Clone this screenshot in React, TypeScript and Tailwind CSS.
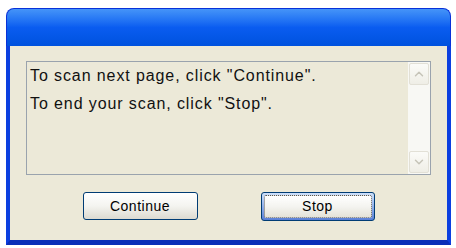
import { ChevronUp, ChevronDown } from "lucide-react"

function ScrollButton({ dir }: { dir: "up" | "down" }) {
  const Icon = dir === "up" ? ChevronUp : ChevronDown
  return (
    <div className="flex h-[22px] w-[20px] items-center justify-center rounded-[2px] border border-[#e2e0d6] bg-gradient-to-b from-[#fbfbf8] to-[#efeee6]">
      <Icon size={14} strokeWidth={2.5} className="text-[#c6c4b8]" />
    </div>
  )
}

export default function App() {
  return (
    <div className="h-[248px] w-[456px] bg-white pl-[6px] pt-[8px] font-['Liberation_Sans',Arial,sans-serif]">
      <div className="flex h-[237px] w-[445px] flex-col">
        <div className="h-[38px] rounded-t-[8px] border border-b-0 border-[#0831d9] bg-gradient-to-b from-[#4594f8] via-[#0a5cf0] to-[#0052de]" />
        <div className="flex flex-1 flex-col border-x-[4px] border-b-[5px] border-x-[#0b3fe0] border-b-[#0a2fb8] bg-[#ece9d8] px-[16px] pt-[15px]">
          <div className="flex h-[114px] border border-[#9aa3ad] bg-[#ece9d8]">
            <div className="flex-1 pl-[3px] pt-0 text-[16px] leading-[28px] tracking-[0.9px] text-[#111]">
              <div>To scan next page, click "Continue".</div>
              <div>To end your scan, click "Stop".</div>
            </div>
            <div className="flex w-[22px] flex-col justify-between bg-[#f8f8f4] py-[1px] pl-[1px]">
              <ScrollButton dir="up" />
              <ScrollButton dir="down" />
            </div>
          </div>
          <div className="mt-[17px] flex justify-center gap-[63px]">
            <button className="h-[28px] w-[115px] rounded-[3px] border border-[#003c74] bg-gradient-to-b from-white via-[#f4f4f0] to-[#dcdad0] text-[14px] tracking-[0.5px] text-black">
              Continue
            </button>
            <button className="h-[29px] w-[114px] rounded-[3px] border border-[#003c74] bg-gradient-to-b from-[#cde0fa] to-[#5a7fd6] p-[2px] text-[14px] tracking-[0.5px] text-black">
              <div className="flex h-full w-full items-center justify-center rounded-[2px] border border-dotted border-[#555] bg-gradient-to-b from-white via-[#f4f4f0] to-[#e4e2d8]">
                Stop
              </div>
            </button>
          </div>
        </div>
      </div>
    </div>
  )
}
